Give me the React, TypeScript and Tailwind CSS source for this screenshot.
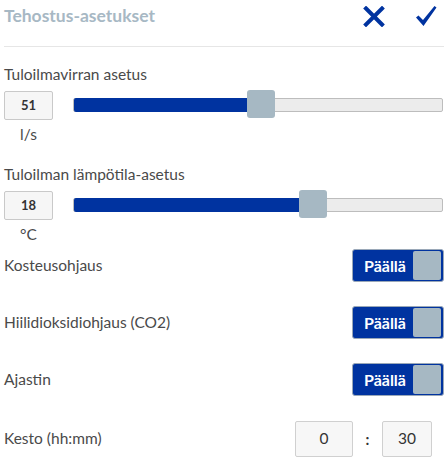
import React from 'react';

const font = { fontFamily: 'Lato, "Noto Sans", sans-serif' };

function ValueSlider({ label, value, unit, thumbLeft }: { label: string; value: number; unit: string; thumbLeft: number }) {
  return (
    <div>
      <div className="text-[15.5px] leading-5 text-[#4a4a4a]">{label}</div>
      <div className="mt-[7px] flex items-start">
        <div className="flex w-[49px] flex-col items-center">
          <div className="flex h-[29px] w-[49px] items-center justify-center rounded-[2px] border border-[#c9c9c9] bg-[#f6f6f6] text-[13px] font-bold text-[#333]">
            {value}
          </div>
          <div className="mt-[4px] text-[15.5px] leading-5 text-[#4a4a4a]">{unit}</div>
        </div>
        <div className="relative ml-[20px] mt-[7px] h-[14px] w-[370px] rounded-[2px] border border-[#bdbdbd] bg-[#ececec]">
          <div className="absolute left-0 top-[-1px] bottom-[-1px] rounded-l-[2px] bg-[#0033a0]" style={{ width: thumbLeft + 14 }} />
          <div className="absolute top-[-9px] h-[28px] w-[28px] rounded-[3px] bg-[#a6b8c3]" style={{ left: thumbLeft }} />
        </div>
      </div>
    </div>
  );
}

function Toggle({ label }: { label: string }) {
  return (
    <div className="flex h-[33px] items-center justify-between">
      <span className="text-[15.5px] text-[#4a4a4a]">{label}</span>
      <div className="flex h-[33px] w-[92px] items-center justify-between rounded-[3px] border border-[#9aa8b8] bg-[#0033a0] pl-[11px] pr-[2px]">
        <span className="text-[16px] font-bold text-white">Päällä</span>
        <div className="h-[29px] w-[28px] rounded-[2px] bg-[#a6b8c3]" />
      </div>
    </div>
  );
}

export default function App() {
  return (
    <div className="w-[448px] bg-white px-1" style={font}>
      <header className="h-[47px] border-b border-[#e6e6e6]">
        <div className="flex h-[32px] items-center justify-between">
          <h1 className="text-[17.5px] font-bold text-[#a7b8c4]">Tehostus-asetukset</h1>
          <div className="flex items-center gap-[30px] pr-[7px]">
            <svg width="22" height="21" viewBox="0 0 22 21">
              <path d="M3 2.5 L19 18.5 M19 2.5 L3 18.5" stroke="#0033a0" strokeWidth="4" strokeLinecap="square" />
            </svg>
            <svg width="22" height="22" viewBox="0 0 22 22">
              <path d="M1 12.5 L3.5 10.5 L8 15 L19.5 1 L21.5 2.5 L8.5 21 Z" fill="#0033a0" />
            </svg>
          </div>
        </div>
      </header>

      <div className="mt-[17px]">
        <ValueSlider label="Tuloilmavirran asetus" value={51} unit="l/s" thumbLeft={173} />
      </div>
      <div className="mt-[20px]">
        <ValueSlider label="Tuloilman lämpötila-asetus" value={18} unit="°C" thumbLeft={225} />
      </div>

      <div className="mt-[5px] flex flex-col gap-[24px]">
        <Toggle label="Kosteusohjaus" />
        <Toggle label="Hiilidioksidiohjaus (CO2)" />
        <Toggle label="Ajastin" />
      </div>

      <div className="mt-[25px] flex h-[36px] items-center justify-between">
        <span className="text-[15.5px] text-[#4a4a4a]">Kesto (hh:mm)</span>
        <div className="flex items-center pr-[12px]">
          <div className="flex h-[36px] w-[58px] items-center justify-center rounded-[2px] border border-[#d0d0d0] bg-[#f7f7f7] text-[15.5px] text-[#333]">0</div>
          <span className="w-[29px] text-center text-[15px] font-bold text-[#333]">:</span>
          <div className="flex h-[36px] w-[50px] items-center justify-center rounded-[2px] border border-[#d0d0d0] bg-[#f7f7f7] text-[15.5px] text-[#333]">30</div>
        </div>
      </div>
    </div>
  );
}
